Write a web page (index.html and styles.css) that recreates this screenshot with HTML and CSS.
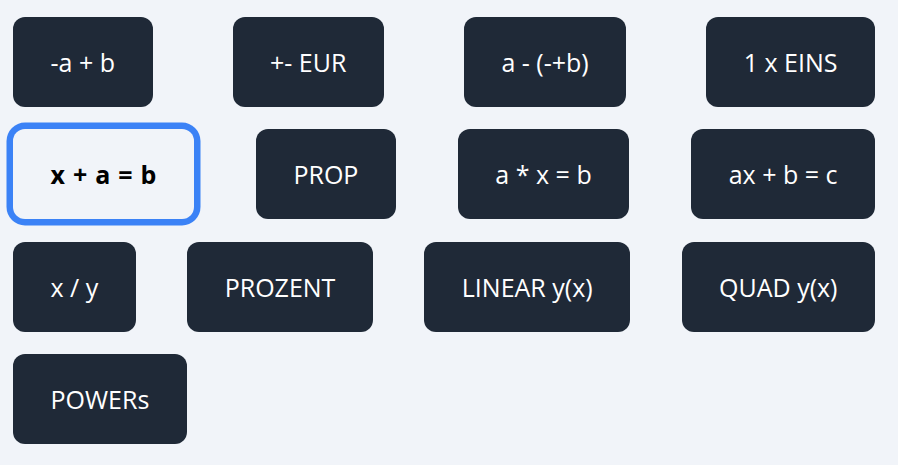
FILE: index.html
```html
<!DOCTYPE html>
<html lang="de">
<head>
    <meta charset="UTF-8">
    <meta name="viewport" content="width=device-width, initial-scale=1.0">
    <title>Mathe Trainer</title>
    <link rel="stylesheet" href="styles.css">
</head>
<body>
    <div class="menu">
        <div class="menu-row">
            <button type="button" class="menu-button">-a + b</button>
            <button type="button" class="menu-button">+- EUR</button>
            <button type="button" class="menu-button">a - (-+b)</button>
            <button type="button" class="menu-button">1 x EINS</button>
        </div>
        <div class="menu-row">
            <button type="button" class="menu-button active">x + a = b</button>
            <button type="button" class="menu-button">PROP</button>
            <button type="button" class="menu-button">a * x = b</button>
            <button type="button" class="menu-button">ax + b = c</button>
        </div>
        <div class="menu-row">
            <button type="button" class="menu-button">x / y</button>
            <button type="button" class="menu-button">PROZENT</button>
            <button type="button" class="menu-button">LINEAR y(x)</button>
            <button type="button" class="menu-button">QUAD y(x)</button>
        </div>
        <div class="menu-row">
            <button type="button" class="menu-button">POWERs</button>
        </div>
    </div>
</body>
</html>
```

FILE: styles.css
```css
* {
    margin: 0;
    padding: 0;
    box-sizing: border-box;
    font-family: "Open Sans", "Noto Sans", sans-serif;
}

body {
    background: #f1f4f9;
    min-height: 100vh;
}

.menu {
    display: flex;
    flex-direction: column;
    gap: 22.33px;
    padding: 17px 23px 0 13px;
}

.menu-row {
    display: flex;
    justify-content: space-between;
}

.menu-button {
    height: 90px;
    padding: 0 37.5px;
    background-color: #1f2937;
    color: white;
    border: none;
    border-radius: 12px;
    font-size: 25px;
    line-height: 32px;
    cursor: pointer;
    white-space: nowrap;
}

.menu-button.active {
    background-color: transparent;
    color: black;
    font-weight: bold;
    word-spacing: 1.5px;
    box-shadow: 0 0 0 6.5px #3b82f6;
}
```
